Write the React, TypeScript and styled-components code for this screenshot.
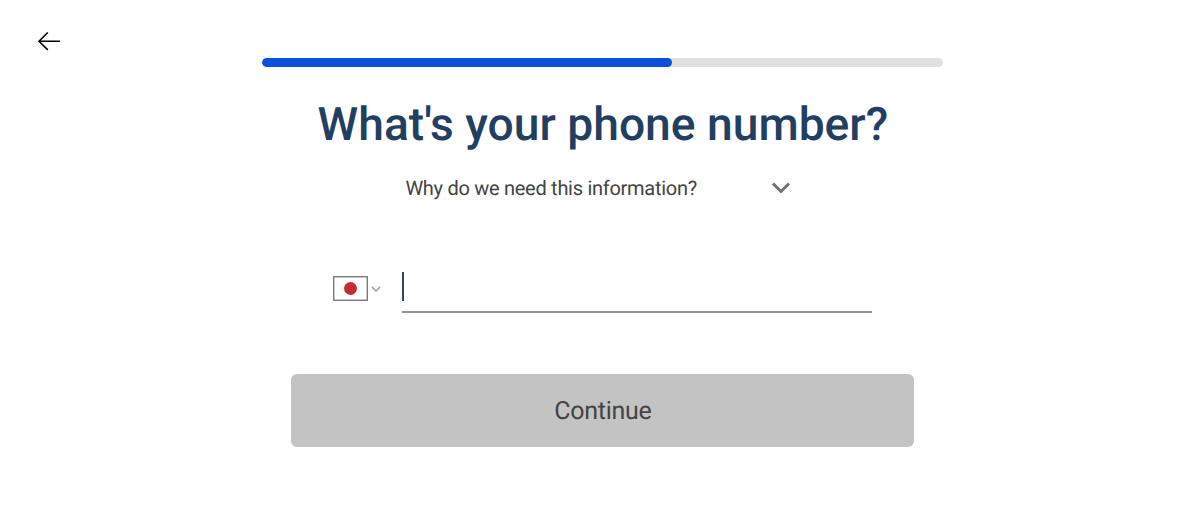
import { useState } from "react";
import styled, { createGlobalStyle } from "styled-components";

const GlobalStyle = createGlobalStyle`
    * {
        box-sizing: border-box;
    }

    body {
        margin: 0;
        background-color: #ffffff;
        font-family: Roboto, sans-serif;
        text-rendering: geometricPrecision;
    }

    button {
        text-rendering: inherit;
    }
`

const Page = styled.main`
    min-height: 522px;
    display: grid;
    grid-template-columns: 262.4px 681px 1fr;
    align-items: start;
`

const BackButton = styled.button`
    margin: 31px 0 0 37px;
    padding: 0;
    width: 24px;
    height: 20px;
    display: flex;
    border: none;
    background-color: transparent;
`

const Content = styled.div`
    display: flex;
    flex-direction: column;
    align-items: center;
    padding-top: 58px;
`

const ProgressTrack = styled.div`
    width: 100%;
    height: 9px;
    border-radius: 5px;
    overflow: hidden;
    background-color: #e0e0e0;
`

const ProgressFill = styled.div`
    height: 100%;
    border-radius: 5px;
    background-color: #0b50da;
`

const Title = styled.h1`
    margin: 30px 0 0;
    font-size: 46.2px;
    line-height: 56px;
    font-weight: 500;
    white-space: nowrap;
    color: #223f61;
`

const InfoButton = styled.button`
    margin: 21px 0 0 -9px;
    padding: 0;
    width: 386px;
    height: 28px;
    display: flex;
    align-items: center;
    justify-content: space-between;
    border: none;
    background-color: transparent;
    font-family: inherit;
    font-size: 20px;
    letter-spacing: -0.28px;
    color: #444444;
`

const PhoneRow = styled.div`
    margin: 61px 0 0 -1px;
    width: 539px;
    height: 50px;
    display: flex;
    align-items: flex-start;
`

const CountryButton = styled.button`
    margin-top: 13px;
    padding: 0;
    width: 69px;
    display: flex;
    align-items: center;
    gap: 3px;
    border: none;
    background-color: transparent;
`

const Flag = styled.span`
    width: 35px;
    height: 25px;
    display: flex;
    align-items: center;
    justify-content: center;
    border: 1px solid #777b80;
    box-shadow: inset 0 0 0 0.5px #92969a;

    &::after {
        content: "";
        width: 13px;
        height: 13px;
        border-radius: 50%;
        background-color: #c62a32;
    }
`

const PhoneField = styled.div`
    flex: 1;
    height: 50px;
    padding-top: 9px;
    border-bottom: 2px solid #949494;
`

const Caret = styled.div`
    width: 2px;
    height: 29px;
    background-color: #33475f;
`

const ContinueButton = styled.button`
    margin-top: 61px;
    padding: 1px 0 0;
    width: 623px;
    height: 73px;
    border: none;
    border-radius: 6px;
    background-color: #c3c3c3;
    font-family: inherit;
    font-size: 25px;
    letter-spacing: -0.3px;
    color: #444444;
`

const App: React.FC = () => {
    const [progress] = useState(60.1)

    return (
        <>
            <GlobalStyle />
            <Page>
                <BackButton type="button" aria-label="Back">
                    <svg width="24" height="20" viewBox="0 0 24 20" fill="none" stroke="#000" strokeWidth="1.6">
                        <path d="M23 10.2H2M10.8 1.5L2 10.2l8.8 8.7" />
                    </svg>
                </BackButton>
                <Content>
                    <ProgressTrack>
                        <ProgressFill style={{ width: `${progress}%` }} />
                    </ProgressTrack>
                    <Title>What's your phone number?</Title>
                    <InfoButton type="button">
                        Why do we need this information?
                        <svg width="20" height="14" viewBox="0 0 20 14" fill="none" stroke="#707070" strokeWidth="3">
                            <path d="M2 2.5l8 8 8-8" />
                        </svg>
                    </InfoButton>
                    <PhoneRow>
                        <CountryButton type="button" aria-label="Japan">
                            <Flag />
                            <svg width="10" height="8" viewBox="0 0 10 8" fill="none" stroke="#999" strokeWidth="1.5">
                                <path d="M1 2l4 4 4-4" />
                            </svg>
                        </CountryButton>
                        <PhoneField>
                            <Caret />
                        </PhoneField>
                    </PhoneRow>
                    <ContinueButton type="button">Continue</ContinueButton>
                </Content>
            </Page>
        </>
    )
}

export default App
